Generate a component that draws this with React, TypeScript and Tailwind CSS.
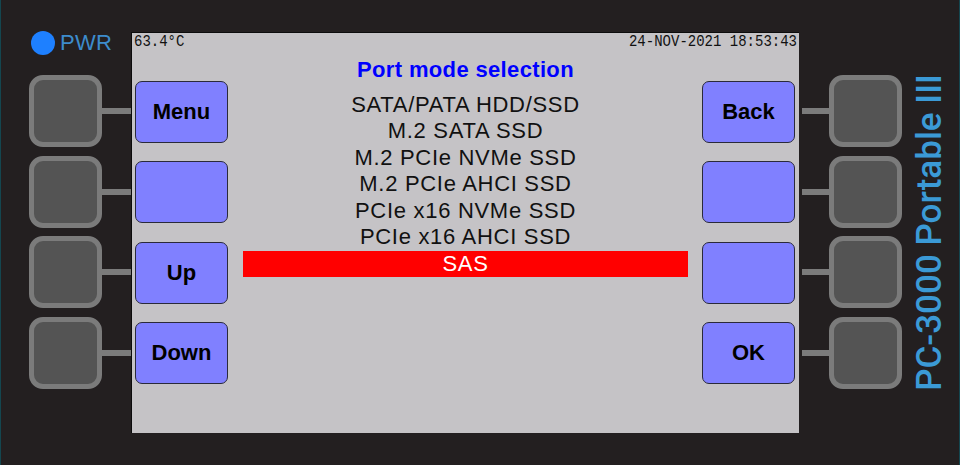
import React from "react";

const HwButton = ({ side }: { side: "left" | "right" }) => (
  <div className="flex items-center">
    {side === "right" && <div className="w-[27px] h-[6px] bg-[#7b7b7b]" />}
    <div className="w-[73px] h-[72px] rounded-[14px] border-[5px] border-[#7b7b7b] bg-[#545454]" />
    {side === "left" && <div className="w-[29px] h-[6px] bg-[#7b7b7b]" />}
  </div>
);

const ScreenButton = ({ label }: { label?: string }) => (
  <div className="w-[93px] h-[62px] rounded-[7px] border border-[#2a2a3a] bg-[#8080ff] flex items-center justify-center text-[22px] font-bold text-black leading-none">
    {label}
  </div>
);

const items = [
  "SATA/PATA HDD/SSD",
  "M.2 SATA SSD",
  "M.2 PCIe NVMe SSD",
  "M.2 PCIe AHCI SSD",
  "PCIe x16 NVMe SSD",
  "PCIe x16 AHCI SSD",
  "SAS",
];

export default function App() {
  return (
    <div
      className="w-[960px] h-[465px] bg-[#231f20] flex items-start border-l border-r border-[#14464f] overflow-hidden"
      style={{ fontFamily: '"Liberation Sans", Arial, sans-serif' }}
    >
      {/* Left column */}
      <div className="w-[130px] shrink-0 flex flex-col pt-[31px]">
        <div className="h-[24px] flex items-center pl-[30px] gap-[5px]">
          <div className="w-[24px] h-[24px] rounded-full bg-[#1e80ff]" />
          <span className="text-[22px] leading-[24px] text-[#3d8ccc] tracking-[0.3px]">PWR</span>
        </div>
        <div className="mt-[20px] flex flex-col gap-[8.67px] pl-[28px]">
          <HwButton side="left" />
          <HwButton side="left" />
          <HwButton side="left" />
          <HwButton side="left" />
        </div>
      </div>

      {/* Screen */}
      <div className="mt-[32px] w-[668px] h-[401px] shrink-0 bg-[#c5c3c6] border-t border-l border-[#0c0c0c] flex flex-col">
        <div
          className="h-[16px] flex justify-between px-[2px] text-[14px] leading-[16px] text-[#111] scale-y-[1.2]"
          style={{ fontFamily: '"Liberation Mono", "DejaVu Sans Mono", monospace' }}
        >
          <span>63.4°C</span>
          <span>24-NOV-2021 18:53:43</span>
        </div>
        <div className="flex flex-1">
          <div className="flex flex-col gap-[18.33px] pt-[32px] pl-[3px]">
            <ScreenButton label="Menu" />
            <ScreenButton />
            <ScreenButton label="Up" />
            <ScreenButton label="Down" />
          </div>
          <div className="flex-1 flex flex-col pt-[8.2px] pl-[15px] pr-[14px]">
            <div className="h-[26.5px] leading-[26.5px] text-center text-[22px] font-bold text-[#0000ff] tracking-[0.35px]">
              Port mode selection
            </div>
            <div className="mt-[8.3px] flex flex-col">
              {items.map((it, i) => (
                <div
                  key={it}
                  className={
                    i === items.length - 1
                      ? "h-[26.5px] leading-[26.5px] text-center text-[22px] tracking-[0.7px] bg-[#ff0000] text-white"
                      : "h-[26.5px] leading-[26.5px] text-center text-[22px] tracking-[0.7px] text-[#111]"
                  }
                >
                  {it}
                </div>
              ))}
            </div>
          </div>
          <div className="flex flex-col gap-[18.33px] pt-[32px] pr-[4px]">
            <ScreenButton label="Back" />
            <ScreenButton />
            <ScreenButton />
            <ScreenButton label="OK" />
          </div>
        </div>
      </div>

      {/* Right column */}
      <div className="flex-1 h-full flex items-start">
        <div className="mt-[75px] ml-[3px] flex flex-col gap-[8.67px]">
          <HwButton side="right" />
          <HwButton side="right" />
          <HwButton side="right" />
          <HwButton side="right" />
        </div>
        <div className="self-center ml-[10px] w-[35px] flex justify-center">
          <span
            className="[writing-mode:vertical-rl] rotate-180 text-[35px] leading-[35px] font-medium text-[#3b9ad6] whitespace-nowrap"
            style={{ fontFamily: 'Roboto, "Liberation Sans", sans-serif' }}
          >
            PC-3000 Portable III
          </span>
        </div>
      </div>
    </div>
  );
}
